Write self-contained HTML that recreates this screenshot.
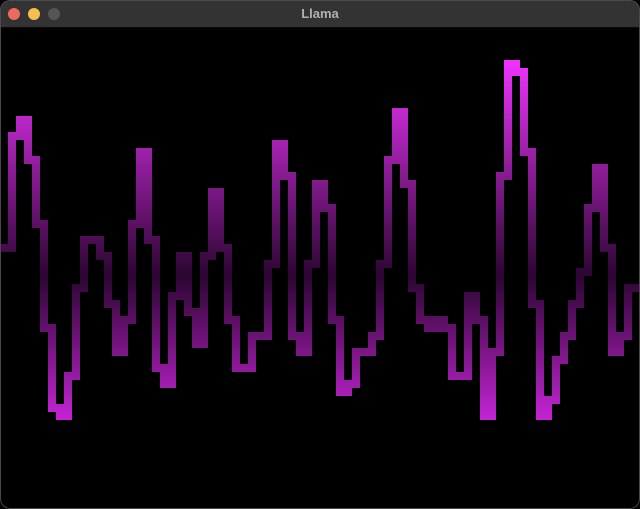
<!DOCTYPE html>
<html><head><meta charset="utf-8"><style>
html,body{margin:0;padding:0;background:#000;}
.win{position:relative;width:640px;height:509px;background:#000;overflow:hidden;border-radius:10px;}
.tb{position:absolute;left:0;top:0;width:640px;height:28px;background:#333;border-bottom:1px solid #0a0a0a;box-sizing:border-box;}
.tl{position:absolute;top:8px;width:12px;height:12px;border-radius:50%;}
.title{position:absolute;left:0;right:0;top:6px;text-align:center;font:bold 13px "Liberation Sans",sans-serif;color:#b0b0b0;}
svg{position:absolute;left:0;top:0;}
.edge{position:absolute;left:0;top:0;width:640px;height:509px;box-sizing:border-box;border:1px solid #4a4a4a;border-radius:10px;pointer-events:none;}
</style></head><body>
<div class="win">
<svg width="640" height="509">
<defs><linearGradient id="g" gradientUnits="userSpaceOnUse" x1="0" y1="60" x2="0" y2="420">
<stop offset="0" stop-color="#f033ff"/>
<stop offset="0.6" stop-color="#2c0632"/>
<stop offset="1" stop-color="#c424d4"/>
</linearGradient></defs>
<g fill="url(#g)">
<rect x="0" y="244" width="8" height="8"/>
<rect x="8" y="132" width="8" height="120"/>
<rect x="16" y="116" width="8" height="24"/>
<rect x="24" y="116" width="8" height="48"/>
<rect x="32" y="156" width="8" height="72"/>
<rect x="40" y="220" width="8" height="112"/>
<rect x="48" y="324" width="8" height="88"/>
<rect x="56" y="404" width="8" height="16"/>
<rect x="64" y="372" width="8" height="48"/>
<rect x="72" y="284" width="8" height="96"/>
<rect x="80" y="236" width="8" height="56"/>
<rect x="88" y="236" width="8" height="8"/>
<rect x="96" y="236" width="8" height="24"/>
<rect x="104" y="252" width="8" height="56"/>
<rect x="112" y="300" width="8" height="56"/>
<rect x="120" y="316" width="8" height="40"/>
<rect x="128" y="220" width="8" height="104"/>
<rect x="136" y="148" width="8" height="80"/>
<rect x="144" y="148" width="8" height="96"/>
<rect x="152" y="236" width="8" height="136"/>
<rect x="160" y="364" width="8" height="24"/>
<rect x="168" y="292" width="8" height="96"/>
<rect x="176" y="252" width="8" height="48"/>
<rect x="184" y="252" width="8" height="64"/>
<rect x="192" y="308" width="8" height="40"/>
<rect x="200" y="252" width="8" height="96"/>
<rect x="208" y="188" width="8" height="72"/>
<rect x="216" y="188" width="8" height="64"/>
<rect x="224" y="244" width="8" height="80"/>
<rect x="232" y="316" width="8" height="56"/>
<rect x="240" y="364" width="8" height="8"/>
<rect x="248" y="332" width="8" height="40"/>
<rect x="256" y="332" width="8" height="8"/>
<rect x="264" y="260" width="8" height="80"/>
<rect x="272" y="140" width="8" height="128"/>
<rect x="280" y="140" width="8" height="40"/>
<rect x="288" y="172" width="8" height="168"/>
<rect x="296" y="332" width="8" height="24"/>
<rect x="304" y="260" width="8" height="96"/>
<rect x="312" y="180" width="8" height="88"/>
<rect x="320" y="180" width="8" height="32"/>
<rect x="328" y="204" width="8" height="120"/>
<rect x="336" y="316" width="8" height="80"/>
<rect x="344" y="380" width="8" height="16"/>
<rect x="352" y="348" width="8" height="40"/>
<rect x="360" y="348" width="8" height="8"/>
<rect x="368" y="332" width="8" height="24"/>
<rect x="376" y="260" width="8" height="80"/>
<rect x="384" y="156" width="8" height="112"/>
<rect x="392" y="108" width="8" height="56"/>
<rect x="400" y="108" width="8" height="80"/>
<rect x="408" y="180" width="8" height="112"/>
<rect x="416" y="284" width="8" height="40"/>
<rect x="424" y="316" width="8" height="16"/>
<rect x="432" y="316" width="8" height="16"/>
<rect x="440" y="316" width="8" height="16"/>
<rect x="448" y="324" width="8" height="56"/>
<rect x="456" y="372" width="8" height="8"/>
<rect x="464" y="292" width="8" height="88"/>
<rect x="472" y="292" width="8" height="32"/>
<rect x="480" y="316" width="8" height="104"/>
<rect x="488" y="348" width="8" height="72"/>
<rect x="496" y="172" width="8" height="184"/>
<rect x="504" y="60" width="8" height="120"/>
<rect x="512" y="60" width="8" height="16"/>
<rect x="520" y="68" width="8" height="88"/>
<rect x="528" y="148" width="8" height="160"/>
<rect x="536" y="300" width="8" height="120"/>
<rect x="544" y="396" width="8" height="24"/>
<rect x="552" y="356" width="8" height="48"/>
<rect x="560" y="332" width="8" height="32"/>
<rect x="568" y="300" width="8" height="40"/>
<rect x="576" y="268" width="8" height="40"/>
<rect x="584" y="204" width="8" height="72"/>
<rect x="592" y="164" width="8" height="48"/>
<rect x="600" y="164" width="8" height="88"/>
<rect x="608" y="244" width="8" height="112"/>
<rect x="616" y="332" width="8" height="24"/>
<rect x="624" y="284" width="8" height="56"/>
<rect x="632" y="284" width="8" height="8"/>
</g>
</svg>
<div class="tb">
<div class="tl" style="left:8px;background:#ed6a5e"></div>
<div class="tl" style="left:28px;background:#f5bf4f"></div>
<div class="tl" style="left:48px;background:#555"></div>
<div class="title">Llama</div>
</div>
<div class="edge"></div>
</div>
</body></html>
